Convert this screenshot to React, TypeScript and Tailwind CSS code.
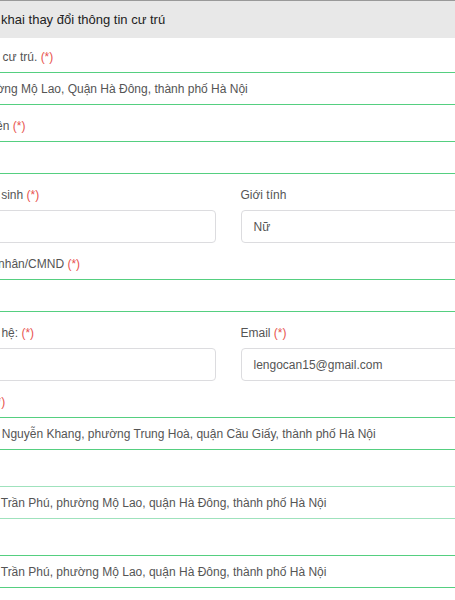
import React from "react";

const Req = () => <span className="text-[#e8534f]">(*)</span>;

function Label({ children }: { children: React.ReactNode }) {
  return (
    <div className="h-[18px] mb-[6px] text-[12px] leading-[18px] text-[#555] whitespace-nowrap">
      {children}
    </div>
  );
}

function LineInput({ value, light }: { value?: string; light?: boolean }) {
  return (
    <div
      className={`h-[33px] border ${light ? "border-[#9fe2bd]" : "border-[#55cf80]"} flex items-center px-[12px] text-[12px] text-[#555] whitespace-nowrap overflow-hidden`}
    >
      {value}
    </div>
  );
}

function BoxInput({ value }: { value?: string }) {
  return (
    <div className="h-[33px] border border-[#dcdcdf] rounded-[4px] flex items-center px-[12px] text-[12px] text-[#555] whitespace-nowrap overflow-hidden">
      {value}
    </div>
  );
}

export default function App() {
  return (
    <div
      className="w-[455px] h-[600px] overflow-hidden bg-white"
      style={{ fontFamily: '"Liberation Sans", Arial, sans-serif' }}
    >
      <div className="h-[38px] bg-[#e8e8e8] border-t border-[#999] flex items-center w-[455px]">
        <div className="ml-[-19px] text-[13px] text-[#222] whitespace-nowrap">
          Tờ khai thay đổi thông tin cư trú
        </div>
      </div>
      <div className="ml-[-96px] w-[648px] pt-[10px] flex flex-col">
        <div className="mb-[12px]">
          <Label>
            Địa chỉ chi tiết nơi cư trú. <Req />
          </Label>
          <LineInput value="Số 7, tổ 1, phường Mộ Lao, Quận Hà Đông, thành phố Hà Nội" />
        </div>
        <div className="mb-[12px]">
          <Label>
            Họ, chữ đệm và tên <Req />
          </Label>
          <LineInput />
        </div>
        <div className="mb-[12px] grid grid-cols-2 gap-x-[25px]">
          <div>
            <Label>
              Ngày, tháng, năm sinh <Req />
            </Label>
            <BoxInput />
          </div>
          <div>
            <Label>Giới tính</Label>
            <BoxInput value="Nữ" />
          </div>
        </div>
        <div className="mb-[12px]">
          <Label>
            Mã Định danh cá nhân/CMND <Req />
          </Label>
          <LineInput />
        </div>
        <div className="mb-[12px] grid grid-cols-2 gap-x-[25px]">
          <div>
            <Label>
              Số Điện thoại liên hệ: <Req />
            </Label>
            <BoxInput />
          </div>
          <div>
            <Label>
              Email <Req />
            </Label>
            <BoxInput value="lengocan15@gmail.com" />
          </div>
        </div>
        <div className="mb-[12px]">
          <Label>
            Chỗ thường trú: <Req />
          </Label>
          <LineInput value="Số 18, ngõ 120 Nguyễn Khang, phường Trung Hoà, quận Cầu Giấy, thành phố Hà Nội" />
        </div>
        <div className="mb-[12px]">
          <Label>Nơi tạm trú</Label>
          <LineInput light value="Số 120, đường Trần Phú, phường Mộ Lao, quận Hà Đông, thành phố Hà Nội" />
        </div>
        <div className="mb-[12px]">
          <Label>Nơi ở hiện tại</Label>
          <LineInput value="Số 120, đường Trần Phú, phường Mộ Lao, quận Hà Đông, thành phố Hà Nội" />
        </div>
      </div>
    </div>
  );
}
